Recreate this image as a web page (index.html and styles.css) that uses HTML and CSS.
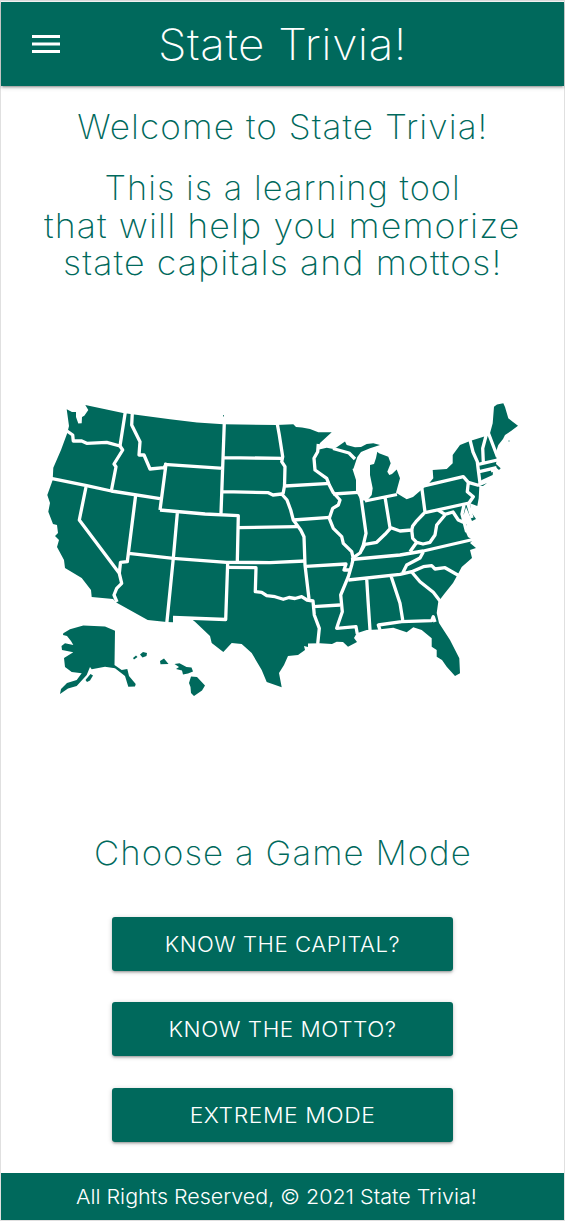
FILE: index.html
```html
<!DOCTYPE html>
<html lang="en">
<head>
<meta charset="utf-8">
<title>State Trivia!</title>
<link rel="stylesheet" href="styles.css">
</head>
<body>
<div class="page">
  <header class="navbar">
    <svg class="menu" viewBox="0 0 28 18" aria-label="Menu"><path d="M0 0h28v3H0zM0 7.5h28v3H0zM0 15h28v3H0z"/></svg>
    <h1 class="brand">State Trivia!</h1>
  </header>
  <main class="content">
    <h2 class="heading welcome">Welcome to State Trivia!</h2>
    <p class="heading intro"><span class="l1">This is a learning tool</span><span class="l2">that will help you memorize</span><span class="l3">state capitals and mottos!</span></p>
    <svg class="map" viewBox="40 395 485 310" role="img" aria-label="Map of the United States">
      <g class="land">
        <path d="M66.7 409.3L72 412L76 412L76 417L78.3 423.5L81.700 423.300L82 417L84.300 415.700L88.300 410L85.300 405L123 413L170 419.300L197 422.500L223.300 424.300L276.700 425L293.300 424.300L296 427L302 427.500L310 429L318.300 432.300L331.700 432.300L320 443L317 450L326.700 447.700L333.300 449L336.700 447.300L345 441.500L346.700 445L355 447.300L361 447L366.700 444L373.300 443.300L380 445L370 448.300L361 452L357.300 457L353.500 468.500L352.500 469L356 480L356 491.700L360.700 500L366.700 501L371.700 495L372.700 488.300L370 475L370 465L374 464L376 458L377.300 451.700L379 453.300L388.300 456.700L390.700 463.300L387.300 471.700L389.300 475L392 474L396.700 469.500L400 478.300L396 492.700L406.700 499.300L413 497L420 491L428.300 484.300L433.300 478.300L432.700 470L446.700 469L452.700 463.300L452.700 455L460 445L470 441L486.700 435.700L490 433.300L492.700 423.300L494 406.700L497 404.500L503.300 403.300L505 407L508.300 418.300L513 422L518 425.700L511 431L505 435L503 439L498.300 445L496 451.700L496.700 460L496 464L500.700 468.300L499 470L496 467.500L493 471L492.700 475L481.700 480L477.300 484.300L479.300 487L478.700 498.300L477.300 506L470 503.300L471 512L476 519L472 521L466 507L461.700 521.700L466.700 524.500L465 530L468 537L473 540L470 543L476 548L470 550L472 558L461.700 567L458 574L453 583L445 593L438.300 601.700L436.700 613L439 623L450 640L459.300 658.300L460 673.300L455 676L446.700 666.700L442 660L436.700 656.700L436.700 650L431.700 646.700L431.700 638.300L421.700 630L413.300 627.300L406.700 632.300L393.300 627.700L378 629.500L366.700 630L356.700 633.300L354 638L357 642L348 646.700L343 642L336.700 641.700L332 644L320 643.300L308 643.500L308 647L304 646L305 650L298 655L288 656L284 665L279 673L281.700 687.300L266.700 682L261.700 670L251.700 653L241.700 644L231.700 643L223.300 652L211.700 643L210 636L195 621.700L189 617L173 618.500L173 622.300L166.700 622L147.700 620L116.700 602.700L113 599L91.700 597L91 590L81.700 578L65 568L64 560L57 547L59 540L55 536L58 533L57 525L53 524L48.300 511.700L50 503L47.300 495L52.700 480L53.300 467.700L61 450L67.300 433L69 426Z"/>
        <path d="M63.300 633.300L70 629.300L83.300 625.500L105 626.500L115 630.700L114.500 665L121.700 670L127.300 669L129 676L135.700 684L135 686.500L128.300 686.700L125 676L115 668.300L105 666.700L91.700 669.300L90 667L86.700 675L76.700 686L68 688.500L60 694L61 689L67 683L76.700 680L81.700 673.300L71.700 672L65 667L64 658L73.300 652.300L62 650L61.500 646L65 643.300L73.300 645L71 641L67 636L63 635Z"/>
        <path d="M85.500 680l5-6l2.500 1.500l-3 5-3 1.500z"/>
        <path d="M133 658l3-2.500 1.500 1.500-3.500 2.500zM140 654.500l3-2.500 4 1-.5 3-4 1.500zM160 661l4-2.500 4.500 5.500-8 .3zM174.500 664l5-.7 7 3.700 5 .5 1.500 4-5 2-5 1-1-4-6-1.500 3-2zM191 676.500l6 .5 8 8.500-3 5-8 5.500-3-3-.5-6-1.500-4z"/>
        <path d="M223 415h.8v1.500h-.8zM480 486l7-3-4 3zM508.500 440.500h1v1h-1z"/>
      </g>
      <g class="borders">
        <path d="M67 431L72.700 435L73.300 441L81.700 441L86.700 443.300L106.700 442.300L120 446L125.300 412"/>
        <path d="M120 446L122.700 450L114 464L116 466.700L111.300 491M51 478.300L86.700 485.700L111.300 491L160 498.700"/>
        <path d="M86 487L79.300 520L119.300 573.300L121.700 583.300L116.700 588.300L114 595L117 602M135.700 495L127.300 561.700L120.500 562.300L119.300 573.300M128.700 553.300L173.300 558.300L226.700 562.300L270 562.600L305 561"/>
        <path d="M177.300 513.300L173.300 558.300L166.700 624M132.300 413L131.700 425L140 441.700L139 455L144 455L150 469L164 467.700L166 464.300L160 510M164 464.300L223.300 468.300M160 510L205 514L238.300 515.700L237.300 561.700M224.300 423L221 513.300M224 457.700L283 458.300M222.700 491.700L268.300 492.700L273 495L281.700 494L287 500L290.700 510L293.300 520L300.700 530L304 536.700L305 565L309 599"/>
        <path d="M277.300 424L279.300 435L282.700 456.700L281.700 461.700L285 466.700L284.500 486L283 494M285 486L330 483.300M238.300 527.700L297 526.700M293.300 520L330 517.300M227.700 562.300L225.700 619.500L173 617.500"/>
        <path d="M227.700 567.300L256 567.700L255.300 591.700L261.700 592.300L266.700 595.700L275 596.700L283.300 599.300L289 597.500L295 598.500L301.700 596.700L307 600L313 601L314.300 615L319.300 628.300L317.700 644M313.500 606.700L340 605M305.700 566.300L346 564L344 570L349 570"/>
        <path d="M318.300 444L317.700 451.700L314 458.300L315 470L326.700 478.300L329.300 485L333.300 492.700L340 500L338.300 505L332.700 508.300L329.300 518.300L333.300 528.300L341.700 536.700L343.300 543.300L351.700 551.700L353.300 558.300L351.700 565L348.300 576.700L340.700 595L342.300 611.700L338.300 623.300L336.700 628.300L356 626.700L357.300 634"/>
        <path d="M333.300 494L358 492.300M333 448.500L349 453L355 459M361 497L366 533.300L363.300 545L360 553.300M353.300 557.700L360 553L365 544.300L376.700 542.300L385 534.300L391 527.700L400 531L411.700 530L412.700 526L416 521.700L423.300 514L425 512L421.700 487M385 497L390 527.700M365 501L397 494.500"/>
        <path d="M424 485.900L463.300 476.700L468.300 482.300L467.300 491.700L473.300 496.700L469 503L425 512.700M468.300 482.300L479 485.500M470 440L473 452L477.300 461.700L478.300 470L480 483M486.500 434L482.700 448.300L483.300 462M488 432L497.500 457M478.300 464.300L497.500 460M479.300 471.700L496.500 467.700M492 468.500L493 472"/>
        <path d="M411.700 530L412.700 538.300L416.700 542.300L410 551.700M416.700 542.300L423 544L430 542.300L435 535L436.700 525L445 515M438 510L445 514.300L453 512L458.300 520L465 523M464 505L462 514L466.700 532M468 504L472 518"/>
        <path d="M351 559.500L400 555L423.300 551L475 539M348.300 580L400 574.300L411.700 571.700L423.300 566.700L431.700 565.700L435 569L445 567.700L459.500 576M423.300 552L420 558L406.700 565L402.700 573M411.700 572L420 581.700L433.300 592.300L440 601M366.700 579L368 600L370 630M391 576L400 603.300L402.700 620M380 630L378.300 625L401.700 621.700L431.700 620.700L433.300 616.700L435 622"/>
      </g>
    </svg>
    <h2 class="heading choose">Choose a Game Mode</h2>
    <nav class="modes">
      <a class="btn"><span class="capital">KNOW THE CAPITAL?</span></a>
      <a class="btn"><span class="motto">KNOW THE MOTTO?</span></a>
      <a class="btn"><span class="extreme">EXTREME MODE</span></a>
    </nav>
  </main>
  <footer class="footer"><span class="rights">All Rights Reserved, © 2021 State Trivia!</span></footer>
</div>
</body>
</html>
```

FILE: styles.css
```css
* { box-sizing: border-box; }
body { margin: 0; background: #fff; font-family: Inter, "Open Sans", sans-serif; color: #00695c; }
.page { width: 565px; height: 1221px; padding-top: 1px; border: 1px solid #e0e0e0; display: flex; flex-direction: column; }
.navbar { height: 84px; flex: none; display: grid; grid-template-columns: 90px 1fr 90px; align-items: center; background: #00695c; color: #fff; box-shadow: 0 2px 2px rgba(0,0,0,.14), 0 3px 1px -2px rgba(0,0,0,.12), 0 1px 5px rgba(0,0,0,.2); }
.menu { width: 28px; height: 18px; margin-left: 31px; fill: #fff; }
.brand { margin: 0; font-size: 43px; font-weight: 200; line-height: 84px; letter-spacing: .5px; text-align: center; white-space: nowrap; transform: scaleX(1.065); }
.content { flex: 1; display: flex; flex-direction: column; align-items: center; }
.heading { margin: 0; font-size: 33.500px; font-weight: 200; line-height: 37.500px; text-align: center; white-space: nowrap; }
.welcome { margin-top: 23px; letter-spacing: 1px; transform: scaleX(1.05); }
.intro { display: flex; flex-direction: column; align-items: center; margin-top: 23.500px; letter-spacing: 1px; }
.l1 { transform: scaleX(1.026); }
.l2 { transform: scaleX(1.067); }
.l3 { transform: scaleX(1.068); }
.map { width: 485px; height: 310px; margin-top: 112.500px; }
.land { fill: #00695c; }
.borders { fill: none; stroke: #fff; stroke-width: 3.300; stroke-linejoin: round; }
.choose { margin-top: 130px; letter-spacing: 1px; transform: scaleX(1.039); }
.modes { display: flex; flex-direction: column; gap: 31.500px; margin-top: 44px; }
.btn { width: 341px; height: 54px; border-radius: 3px; background: #00695c; color: #fff; font-size: 21px; font-weight: 300; line-height: 55px; text-align: center; box-shadow: 0 2px 2px rgba(0,0,0,.14), 0 3px 1px -2px rgba(0,0,0,.12), 0 1px 5px rgba(0,0,0,.2); letter-spacing: .5px; }
.btn span { display: block; }
.capital { transform: scaleX(1.054); }
.motto { transform: scaleX(1.07); }
.extreme { transform: scaleX(1.089); }
.footer { height: 47px; flex: none; background: #00695c; color: #fff; font-size: 20.500px; font-weight: 300; line-height: 47px; padding-left: 75px; white-space: nowrap; }
.rights { display: inline-block; transform: scaleX(1.047); transform-origin: left; }
```
